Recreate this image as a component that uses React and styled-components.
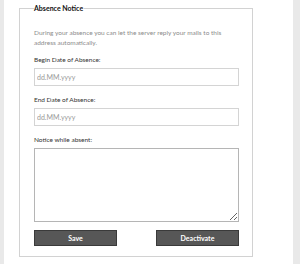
import React from "react";
import styled, { createGlobalStyle } from "styled-components";

const Global = createGlobalStyle`
  html, body { margin: 0; padding: 0; }
  body {
    background: #e9e9e9;
    font-family: Lato, "Liberation Sans", sans-serif;
    -webkit-font-smoothing: antialiased;
  }
  * { box-sizing: border-box; }
`;

const Page = styled.div`
  display: flex;
  min-height: 264px;
  padding: 0 7px 0 4px;
`;

const Panel = styled.div`
  flex: 1;
  background: #fff;
  padding: 2px 0 0 15px;
`;

const Fieldset = styled.fieldset`
  margin: 0;
  width: 234px;
  border: 1px solid #d2d2d2;
  padding: 14px 13px 10px 14px;
  min-width: 0;
`;

const Legend = styled.legend`
  padding: 0 1px 0 0;
  font-size: 7px;
  line-height: 12px;
  font-weight: 700;
  color: #111;
`;

const Description = styled.p`
  margin: 0 0 7px;
  font-size: 6.5px;
  line-height: 10px;
  color: #8c8c8c;
`;

const Field = styled.div`
  display: flex;
  flex-direction: column;
  gap: 3px;
  margin-bottom: ${(p) => p.$gap ?? 9}px;
`;

const Label = styled.label`
  font-size: 6.5px;
  line-height: 10px;
  color: #333;
`;

const Input = styled.input`
  height: 18px;
  width: 100%;
  margin: 0;
  border: 1px solid #d4d4d4;
  padding: 0 2px;
  font-family: inherit;
  font-size: 7px;
  color: #333;
  background: #fff;
  outline: none;
  &::placeholder { color: #999; }
`;

const TextArea = styled.textarea`
  display: block;
  height: 74px;
  width: 100%;
  margin: 0;
  border: 1px solid #b5b5b5;
  padding: 2px;
  font-family: inherit;
  font-size: 7px;
  resize: both;
  outline: none;
`;

const Buttons = styled.div`
  display: flex;
  justify-content: space-between;
  margin-top: 8px;
`;

const Button = styled.button`
  width: ${(p) => p.$w}px;
  height: 16px;
  margin: 0;
  padding: 0;
  border: 1px solid #3a3a3a;
  background: #575757;
  color: #fff;
  font-family: inherit;
  font-size: 7px;
  font-weight: 700;
  cursor: pointer;
`;

export default function App() {
  return (
    <>
      <Global />
      <Page>
        <Panel>
          <Fieldset>
            <Legend>Absence Notice</Legend>
            <Description>
              During your absence you can let the server reply your mails to this
              address automatically.
            </Description>
            <Field>
              <Label>Begin Date of Absence:</Label>
              <Input placeholder="dd.MM.yyyy" />
            </Field>
            <Field>
              <Label>End Date of Absence:</Label>
              <Input placeholder="dd.MM.yyyy" />
            </Field>
            <Field $gap={0}>
              <Label>Notice while absent:</Label>
              <TextArea />
            </Field>
            <Buttons>
              <Button $w={83}>Save</Button>
              <Button $w={83}>Deactivate</Button>
            </Buttons>
          </Fieldset>
        </Panel>
      </Page>
    </>
  );
}
